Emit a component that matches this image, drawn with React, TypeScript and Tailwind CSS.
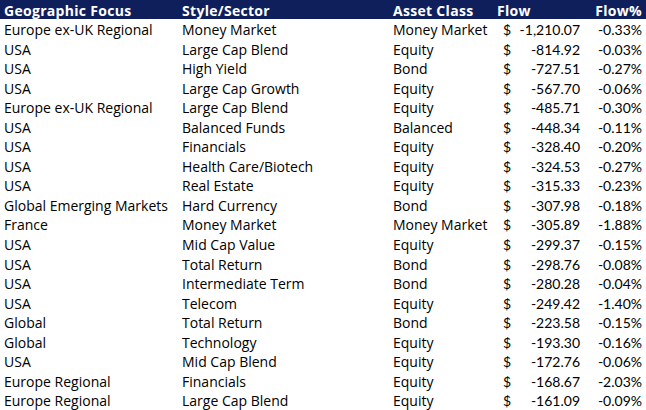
const rows: [string, string, string, string, string][] = [
  ["Europe ex-UK Regional", "Money Market", "Money Market", "-1,210.07", "-0.33%"],
  ["USA", "Large Cap Blend", "Equity", "-814.92", "-0.03%"],
  ["USA", "High Yield", "Bond", "-727.51", "-0.27%"],
  ["USA", "Large Cap Growth", "Equity", "-567.70", "-0.06%"],
  ["Europe ex-UK Regional", "Large Cap Blend", "Equity", "-485.71", "-0.30%"],
  ["USA", "Balanced Funds", "Balanced", "-448.34", "-0.11%"],
  ["USA", "Financials", "Equity", "-328.40", "-0.20%"],
  ["USA", "Health Care/Biotech", "Equity", "-324.53", "-0.27%"],
  ["USA", "Real Estate", "Equity", "-315.33", "-0.23%"],
  ["Global Emerging Markets", "Hard Currency", "Bond", "-307.98", "-0.18%"],
  ["France", "Money Market", "Money Market", "-305.89", "-1.88%"],
  ["USA", "Mid Cap Value", "Equity", "-299.37", "-0.15%"],
  ["USA", "Total Return", "Bond", "-298.76", "-0.08%"],
  ["USA", "Intermediate Term", "Bond", "-280.28", "-0.04%"],
  ["USA", "Telecom", "Equity", "-249.42", "-1.40%"],
  ["Global", "Total Return", "Bond", "-223.58", "-0.15%"],
  ["Global", "Technology", "Equity", "-193.30", "-0.16%"],
  ["USA", "Mid Cap Blend", "Equity", "-172.76", "-0.06%"],
  ["Europe Regional", "Financials", "Equity", "-168.67", "-2.03%"],
  ["Europe Regional", "Large Cap Blend", "Equity", "-161.09", "-0.09%"],
];

export default function App() {
  return (
    <div className="w-[646px] h-[410px] bg-white overflow-hidden text-[14px] text-black font-['Open_Sans',sans-serif]">
      {/* header */}
      <div className="grid grid-cols-[182px_211px_104px_84px_65px] h-[19px] items-center bg-[#0e1f5b] text-white font-bold tracking-[0.3px]">
        <div className="pl-[4px]">Geographic Focus</div>
        <div>Style/Sector</div>
        <div>Asset Class</div>
        <div>Flow</div>
        <div className="text-right pr-[4px]">Flow%</div>
      </div>
      {rows.map((r, i) => (
        <div key={i} className="grid grid-cols-[182px_211px_104px_84px_65px] h-[19.55px] items-center whitespace-nowrap">
          <div className="pl-[4px]">{r[0]}</div>
          <div>{r[1]}</div>
          <div>{r[2]}</div>
          <div className="flex justify-between pl-[6px] pr-[1px] font-['Lato',sans-serif]">
            <span>$</span>
            <span>{r[3]}</span>
          </div>
          <div className="text-right pr-[4px] font-['Lato',sans-serif]">{r[4]}</div>
        </div>
      ))}
    </div>
  );
}
